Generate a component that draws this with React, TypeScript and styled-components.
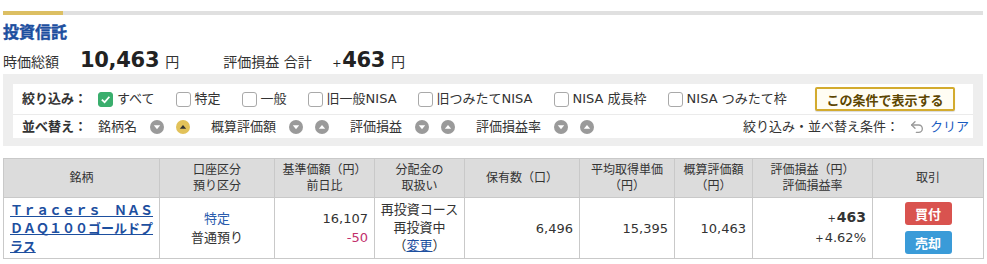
import React from 'react';
import styled, { createGlobalStyle } from 'styled-components';
import { Undo2 } from 'lucide-react';

const GlobalStyle = createGlobalStyle`
  body {
    margin: 0;
    background: #fff;
    color: #333;
    font-family: 'DejaVu Sans', 'Noto Sans CJK JP', sans-serif;
    font-size: 13px;
  }
`;

const Page = styled.div`
  width: 980px;
  padding: 11px 4px 0 3px;
`;

const TabBar = styled.div`
  display: flex;
  height: 4px;
  background: #e0e0e0;
`;

const TabActive = styled.div`
  width: 60px;
  background: #dcbf63;
`;

const Title = styled.h2`
  margin: 0;
  padding-top: 6px;
  height: 21px;
  line-height: 21px;
  font-family: 'Noto Sans CJK JP', sans-serif;
  font-size: 16px;
  font-weight: 700;
  color: #1d4f9f;
  -webkit-text-stroke: 0.4px #1d4f9f;
`;

const Summary = styled.div`
  display: flex;
  align-items: baseline;
  padding-top: 5px;
  height: 27px;
  line-height: 27px;
`;

const SummaryLabel = styled.span<{ $w: number }>`
  width: ${p => p.$w}px;
  font-size: 14px;
`;

const BigNum = styled.span`
  font-size: 21px;
  font-weight: bold;
  color: #222;
  letter-spacing: -0.3px;
`;

const Plus = styled.span<{ $size?: number }>`
  font-size: ${p => p.$size ?? 11}px;
  font-weight: normal;
  margin-right: 1px;
`;

const Yen = styled.span<{ $mr?: number }>`
  font-size: 14px;
  margin-left: 6px;
  margin-right: ${p => p.$mr ?? 0}px;
`;

const FilterPanel = styled.div`
  background: #eeeeee;
  padding: 10px 10px 8px 10px;
`;

const FilterBox = styled.div`
  background: #fff;
`;

const FilterRow = styled.div<{ $h: number; $line?: boolean }>`
  display: flex;
  align-items: center;
  height: ${p => p.$h}px;
  padding: 0 4px 0 9px;
  border-bottom: ${p => (p.$line ? '1px solid #ebebeb' : 'none')};
  line-height: 18px;
`;

const RowLabel = styled.span`
  width: 76px;
  font-weight: bold;
  color: #333;
`;

const CheckItem = styled.label`
  display: flex;
  align-items: center;
  margin-right: 21px;
  color: #333;
`;

const Box = styled.span<{ $on?: boolean }>`
  display: inline-flex;
  align-items: center;
  justify-content: center;
  box-sizing: border-box;
  width: 15px;
  height: 15px;
  margin-right: 4px;
  border-radius: 3px;
  border: 1px solid ${p => (p.$on ? '#3aae6d' : '#a9a9a9')};
  background: ${p => (p.$on ? '#3aae6d' : '#fff')};
`;

const ApplyButton = styled.button`
  margin-left: auto;
  margin-right: 14px;
  width: 140px;
  height: 24px;
  box-sizing: border-box;
  border: 2px solid #d3ab2e;
  border-radius: 2px;
  background: #fffdf3;
  color: #5c4500;
  font-family: inherit;
  font-size: 13px;
  font-weight: bold;
  padding: 0;
  box-shadow: 0 1px 1px rgba(0, 0, 0, 0.15);
`;

const SortItem = styled.div`
  display: flex;
  align-items: center;
  margin-right: 21px;
`;

const SortText = styled.span`
  margin-right: 13px;
`;

const SortIconWrap = styled.span<{ $mr?: number }>`
  display: inline-flex;
  margin-right: ${p => p.$mr ?? 0}px;
`;

const Conditions = styled.div`
  margin-left: auto;
  display: flex;
  align-items: center;
  color: #333;
`;

const ClearLink = styled.a`
  display: inline-flex;
  align-items: center;
  margin-left: 10px;
  color: #1a5bbf;
  text-decoration: none;
  svg {
    margin-right: 5px;
  }
`;

const Table = styled.table`
  margin-top: 12px;
  width: 980px;
  border-collapse: collapse;
  table-layout: fixed;
`;

const Th = styled.th<{ $w: number }>`
  box-sizing: border-box;
  width: ${p => p.$w}px;
  height: 39px;
  padding: 0 2px;
  background: #dcdcdc;
  border: 1px solid #c9c9c9;
  font-size: 12px;
  font-weight: normal;
  line-height: 16px;
  color: #333;
  text-align: center;
`;

const Td = styled.td<{ $align?: string; $pad?: number }>`
  box-sizing: border-box;
  height: 61px;
  padding: 0 ${p => p.$pad ?? 6}px;
  border: 1px solid #c9c9c9;
  text-align: ${p => p.$align ?? 'center'};
  vertical-align: middle;
  line-height: 19px;
  font-size: 13px;
  color: #333;
  white-space: nowrap;
`;

const NameLink = styled.a`
  display: block;
  color: #1d4f9f;
  font-weight: bold;
  font-family: 'Noto Sans CJK JP', sans-serif;
  line-height: 18px;
`;

const NameLine = styled.span<{ $justify?: boolean }>`
  display: block;
  text-decoration: underline;
  text-align: ${p => (p.$justify ? 'justify' : 'left')};
  text-align-last: ${p => (p.$justify ? 'justify' : 'left')};
`;

const Line = styled.div<{ $color?: string; $bold?: boolean; $size?: number }>`
  color: ${p => p.$color ?? '#333'};
  font-weight: ${p => (p.$bold ? 'bold' : 'normal')};
  font-size: ${p => p.$size ?? 13}px;
`;

const Lines = styled.div`
  line-height: 18px;
`;

const InlineLink = styled.a`
  color: #1d4f9f;
  text-decoration: underline;
`;

const TradeCell = styled.div`
  display: flex;
  flex-direction: column;
  align-items: center;
  gap: 6px;
`;

const TradeButton = styled.button<{ $bg: string }>`
  width: 47px;
  height: 23px;
  padding: 0;
  border: none;
  border-radius: 3px;
  background: ${p => p.$bg};
  color: #fff;
  font-family: 'Noto Sans CJK JP', sans-serif;
  font-size: 13px;
  font-weight: bold;
  line-height: 23px;
`;

const Check = () => (
  <svg width="11" height="11" viewBox="0 0 12 12">
    <path d="M2 6.2 L5 9 L10.2 3" fill="none" stroke="#fff" strokeWidth="2" />
  </svg>
);

const SortIcon: React.FC<{ up?: boolean; active?: boolean }> = ({ up, active }) => (
  <svg width="14" height="14" viewBox="0 0 14 14">
    <circle cx="7" cy="7" r="7" fill={active ? '#e2c25a' : '#9a9a9a'} />
    {up ? (
      <path d="M3.8 8.8 L10.2 8.8 L7 4.9 Z" fill={active ? '#333' : '#fff'} />
    ) : (
      <path d="M3.8 5.3 L10.2 5.3 L7 9.2 Z" fill="#fff" />
    )}
  </svg>
);

const filters = [
  { label: 'すべて', on: true },
  { label: '特定' },
  { label: '一般' },
  { label: '旧一般NISA' },
  { label: '旧つみたてNISA' },
  { label: 'NISA 成長枠' },
  { label: 'NISA つみたて枠' },
];

const sorts = [
  { label: '銘柄名', activeUp: true },
  { label: '概算評価額' },
  { label: '評価損益' },
  { label: '評価損益率' },
];

const headers: { w: number; lines: string[] }[] = [
  { w: 156, lines: ['銘柄'] },
  { w: 115, lines: ['口座区分', '預り区分'] },
  { w: 100, lines: ['基準価額（円）', '前日比'] },
  { w: 90, lines: ['分配金の', '取扱い'] },
  { w: 115, lines: ['保有数（口）'] },
  { w: 95, lines: ['平均取得単価', '（円）'] },
  { w: 78, lines: ['概算評価額', '（円）'] },
  { w: 120, lines: ['評価損益（円）', '評価損益率'] },
  { w: 111, lines: ['取引'] },
];

const App: React.FC = () => {
  return (
    <Page>
      <GlobalStyle />
      <TabBar>
        <TabActive />
      </TabBar>
      <Title>投資信託</Title>
      <Summary>
        <SummaryLabel $w={77}>時価総額</SummaryLabel>
        <BigNum>10,463</BigNum>
        <Yen $mr={44}>円</Yen>
        <SummaryLabel $w={109}>評価損益 合計</SummaryLabel>
        <BigNum>
          <Plus>+</Plus>463
        </BigNum>
        <Yen>円</Yen>
      </Summary>

      <FilterPanel>
        <FilterBox>
          <FilterRow $h={30} $line>
            <RowLabel>絞り込み：</RowLabel>
            {filters.map(f => (
              <CheckItem key={f.label}>
                <Box $on={f.on}>{f.on && <Check />}</Box>
                {f.label}
              </CheckItem>
            ))}
            <ApplyButton>この条件で表示する</ApplyButton>
          </FilterRow>
          <FilterRow $h={23}>
            <RowLabel>並べ替え：</RowLabel>
            {sorts.map(s => (
              <SortItem key={s.label}>
                <SortText>{s.label}</SortText>
                <SortIconWrap $mr={12}>
                  <SortIcon />
                </SortIconWrap>
                <SortIconWrap>
                  <SortIcon up active={s.activeUp} />
                </SortIconWrap>
              </SortItem>
            ))}
            <Conditions>
              絞り込み・並べ替え条件：
              <ClearLink>
                <Undo2 size={16} color="#999" strokeWidth={2} />
                クリア
              </ClearLink>
            </Conditions>
          </FilterRow>
        </FilterBox>
      </FilterPanel>

      <Table>
        <thead>
          <tr>
            {headers.map(h => (
              <Th key={h.lines[0]} $w={h.w}>
                {h.lines.map(l => (
                  <div key={l}>{l}</div>
                ))}
              </Th>
            ))}
          </tr>
        </thead>
        <tbody>
          <tr>
            <Td $align="left">
              <NameLink>
                <NameLine $justify>Ｔｒａｃｅｒｓ　ＮＡＳ</NameLine>
                <NameLine $justify>ＤＡＱ１００ゴールドプ</NameLine>
                <NameLine>ラス</NameLine>
              </NameLink>
            </Td>
            <Td>
              <Line $color="#2a5cad">特定</Line>
              <Line>普通預り</Line>
            </Td>
            <Td $align="right">
              <Line>16,107</Line>
              <Line $color="#c2306c">-50</Line>
            </Td>
            <Td $pad={0}>
              <Lines>
                <Line>再投資コース</Line>
                <Line>再投資中</Line>
                <Line>
                  （<InlineLink>変更</InlineLink>）
                </Line>
              </Lines>
            </Td>
            <Td $align="right">6,496</Td>
            <Td $align="right">15,395</Td>
            <Td $align="right">10,463</Td>
            <Td $align="right">
              <Line $bold $size={14}>
                <Plus $size={10}>+</Plus>463
              </Line>
              <Line>
                <Plus $size={10}>+</Plus>4.62%
              </Line>
            </Td>
            <Td>
              <TradeCell>
                <TradeButton $bg="#d9534f">買付</TradeButton>
                <TradeButton $bg="#3a9bd8">売却</TradeButton>
              </TradeCell>
            </Td>
          </tr>
        </tbody>
      </Table>
    </Page>
  );
};

export default App;
